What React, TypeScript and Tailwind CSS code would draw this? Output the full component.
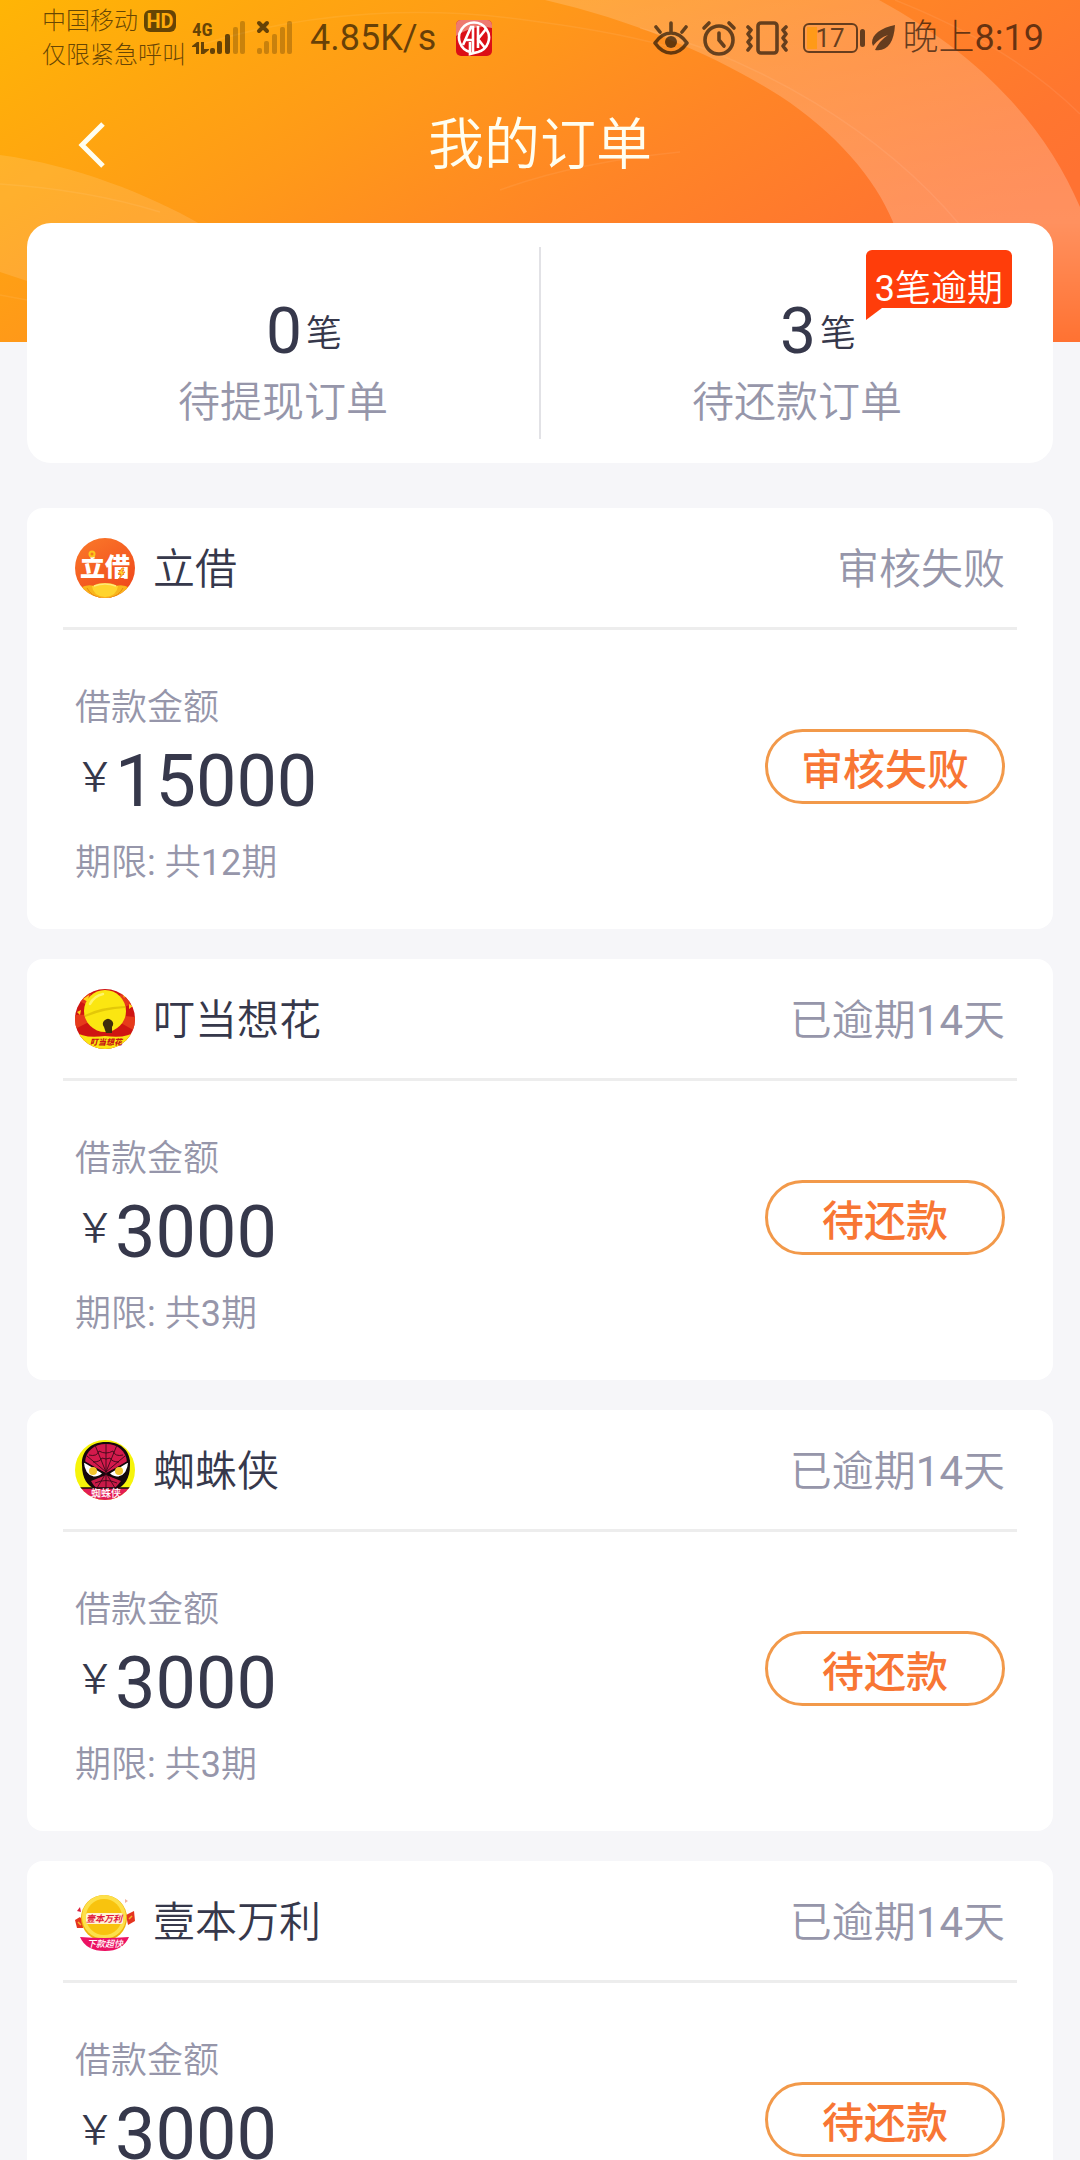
import type { ReactNode } from "react"

interface Order {
  name: string
  status: string
  amount: number
  periods: number
  action: string
  logo: ReactNode
}

// 立借
function LijieLogo() {
  return (
    <svg className="w-15 h-15" viewBox="0 0 60 60" aria-hidden="true">
      <defs>
        <clipPath id="lijie-clip">
          <circle cx="30" cy="30" r="30" />
        </clipPath>
        <linearGradient id="lijie-bg" x1="0" y1="0" x2="0.6" y2="1">
          <stop offset="0" stopColor="#fb7a2a" />
          <stop offset="1" stopColor="#f04a1c" />
        </linearGradient>
      </defs>
      <g clipPath="url(#lijie-clip)">
        <rect width="60" height="60" fill="url(#lijie-bg)" />
        <path d="M5 50Q12 46 19 48Q21 45 30 45Q39 45 41 48Q48 46 55 50L48 62H12Z" fill="#f9b51b" />
        <path d="M17 48Q30 45 43 48Q42 58 30 59Q18 58 17 48Z" fill="#ffd42e" />
        <path d="M12 50Q16 58 26 60M48 50Q44 58 34 60" stroke="#e88a10" strokeWidth="1" fill="none" />
        <path d="M19 48Q30 44 41 48" stroke="#ffe97a" strokeWidth="1.5" fill="none" />
      </g>
      <text x="30" y="38" textAnchor="middle" fontSize="25" className="font-['Noto_Sans_CJK_SC',sans-serif] font-black" fill="#fff">
        立借
      </text>
      <circle cx="17" cy="16" r="2.5" fill="#f47c1f" stroke="#fcc61c" strokeWidth="2" />
      <path d="M47 30L43 36H46L44 41L50 34H47L49 30Z" fill="#ffd42e" stroke="#f07a1c" strokeWidth="0.8" />
    </svg>
  )
}

// 叮当想花
function DingdangLogo() {
  return (
    <svg className="w-15 h-15" viewBox="0 0 60 60" aria-hidden="true">
      <defs>
        <clipPath id="dingdang-clip">
          <circle cx="30" cy="30" r="30" />
        </clipPath>
      </defs>
      <g clipPath="url(#dingdang-clip)">
        <rect width="60" height="60" fill="#cf1512" />
        <path d="M0 10L30 25L12 0ZM60 14L30 25L50 0ZM0 40L30 25L0 26ZM60 42L30 25L60 28Z" fill="#e63a1b" />
        <path d="M8 10L14 6L13 13ZM47 3L52 5L49 9ZM2 23L6 21L5 26ZM54 15L58 17L54 20Z" fill="#ffd51a" />
        <circle cx="30" cy="22" r="21" fill="#fbe611" />
        <path d="M10 26Q24 18 50 17L50 19Q30 20 10 28Z" fill="#e3c808" />
        <path d="M15 15Q19 7 28 5" stroke="#fff46a" strokeWidth="2.5" strokeLinecap="round" fill="none" />
        <path d="M29 38A5 5 0 1 1 37 38L37 44H31Z" fill="#3f2c0c" />
        <path d="M0 42Q8 50 30 47Q52 50 60 42V60H0Z" fill="#fbe611" />
      </g>
      <text x="31" y="56" textAnchor="middle" fontSize="8" fontStyle="italic" className="font-['Noto_Sans_CJK_SC',sans-serif] font-black" fill="#c81414">
        叮当想花
      </text>
    </svg>
  )
}

// 蜘蛛侠
function SpiderLogo() {
  return (
    <svg className="w-15 h-15" viewBox="0 0 60 60" aria-hidden="true">
      <defs>
        <clipPath id="spider-clip">
          <circle cx="30" cy="30" r="30" />
        </clipPath>
      </defs>
      <g clipPath="url(#spider-clip)">
        <rect width="60" height="60" fill="#f6f40a" />
        <path d="M31 2C47 2 56 12 55 25C55 39 49 46 42 49H20C13 46 7 39 7 25C6 12 15 2 31 2Z" fill="#14080c" />
        <path d="M31 4C43 4 51 11 52 22L31 33L10 22C11 11 19 4 31 4Z" fill="#d31a4c" />
        <path d="M31 35L46 41C43 45 40 48 38 49H24C21 48 18 45 16 41Z" fill="#c91a48" />
        <path
          d="M31 4V48M31 32L20 5M31 32L42 5M31 32L12 16M31 32L50 16M14 15Q22 17 24 11Q31 15 38 11Q40 17 48 15M18 22Q25 22 27 18Q31 20 35 18Q37 22 44 22M31 33L22 48M31 33L40 48M20 43Q31 38 42 43"
          stroke="#3a0a18"
          strokeWidth="0.9"
          fill="none"
        />
        <path d="M8 21L28 33Q25 38 18 37Q9 35 8 21ZM54 21L34 33Q37 38 44 37Q53 35 54 21Z" fill="#fff" stroke="#14080c" strokeWidth="1.5" />
        <circle cx="18" cy="31" r="4" fill="#f2c52c" />
        <circle cx="44" cy="31" r="4" fill="#f2c52c" />
        <path d="M0 48H60V60H0Z" fill="#e21d55" />
        <path d="M3 48H57" stroke="#14080c" strokeWidth="1.5" />
      </g>
      <text x="31" y="57" textAnchor="middle" fontSize="10" className="font-['Noto_Sans_CJK_SC',sans-serif] font-medium" fill="#fff">
        蜘蛛侠
      </text>
    </svg>
  )
}

// 壹本万利
function YibenLogo() {
  return (
    <svg className="w-15 h-15" viewBox="0 0 60 60" aria-hidden="true">
      <path d="M0 29L5 26L9 31L8 37L2 37Z" fill="#e5341f" />
      <path d="M51 24L59 20L60 30L53 34Z" fill="#e5341f" />
      <path d="M54 28L57 25" stroke="#f7b52c" strokeWidth="1.5" />
      <path d="M3 31L6 34" stroke="#f7b52c" strokeWidth="1.5" />
      <path d="M2 20L5 16L6 21Z" fill="#d9203f" />
      <path d="M50 8L53 10L50 12Z" fill="#f4b4a0" />
      <circle cx="29" cy="27" r="23" fill="#efb30b" />
      <circle cx="29" cy="26" r="22" fill="#fde04a" />
      <circle cx="29" cy="26" r="18" fill="#f8c30e" />
      <rect x="11" y="22" width="37" height="11" rx="2" fill="#fff3d6" />
      <text x="29" y="31" textAnchor="middle" fontSize="9" fontStyle="italic" className="font-['Noto_Sans_CJK_SC',sans-serif] font-bold" fill="#e0183e">
        壹本万利
      </text>
      <path d="M5 46Q29 48 54 46Q48 60 30 60Q11 60 5 46Z" fill="#ec1263" />
      <text x="30" y="56" textAnchor="middle" fontSize="9" fontStyle="italic" className="font-['Noto_Sans_CJK_SC',sans-serif] font-medium" fill="#fff">
        下款超快
      </text>
    </svg>
  )
}

const orders: Order[] = [
  { name: "立借", status: "审核失败", amount: 15000, periods: 12, action: "审核失败", logo: <LijieLogo /> },
  { name: "叮当想花", status: "已逾期14天", amount: 3000, periods: 3, action: "待还款", logo: <DingdangLogo /> },
  { name: "蜘蛛侠", status: "已逾期14天", amount: 3000, periods: 3, action: "待还款", logo: <SpiderLogo /> },
  { name: "壹本万利", status: "已逾期14天", amount: 3000, periods: 3, action: "待还款", logo: <YibenLogo /> },
]

function HeaderBackground() {
  return (
    <svg
      className="absolute inset-x-0 top-0 -z-10 w-full h-[342px]"
      viewBox="0 0 1080 342"
      preserveAspectRatio="none"
      aria-hidden="true"
    >
      <defs>
        <linearGradient id="header-bg" gradientUnits="userSpaceOnUse" x1="0" y1="0" x2="383" y2="609">
          <stop offset="0" stopColor="#ffb505" />
          <stop offset="0.4" stopColor="#ff9a18" />
          <stop offset="0.66" stopColor="#ff8526" />
          <stop offset="0.9" stopColor="#ff762f" />
          <stop offset="1" stopColor="#ff7232" />
        </linearGradient>
        <linearGradient id="band" x1="0" y1="0" x2="0" y2="1">
          <stop offset="0" stopColor="#fff" stopOpacity="0.16" />
          <stop offset="0.65" stopColor="#fff" stopOpacity="0.22" />
          <stop offset="1" stopColor="#fff" stopOpacity="0" />
        </linearGradient>
      </defs>
      <rect width="1080" height="342" fill="url(#header-bg)" />
      <path d="M545 0C640 22 720 58 780 96C835 132 875 178 893 222L920 342H1080V207C1045 125 980 55 879 0Z" fill="url(#band)" />
      <path d="M0 155C75 165 150 195 200 224V342H60L27 281L0 272Z" fill="#fff" fillOpacity="0.12" />
      <path
        d="M0 184C60 188 115 198 160 212M0 295L27 300M640 28C760 60 880 130 960 225M895 0C970 30 1030 65 1080 114M200 45C310 10 430 5 540 22C600 30 640 38 680 50M500 190C560 168 620 158 680 152"
        stroke="#fff"
        strokeOpacity="0.07"
        strokeWidth="1.5"
        fill="none"
      />
    </svg>
  )
}

function SignalIcons() {
  return (
    <svg className="w-[102px] h-9 ml-1.5" viewBox="0 0 102 36" fill="currentColor" aria-hidden="true">
      <text x="0" y="16" fontSize="19" className="font-['Roboto_Condensed','Liberation_Sans_Narrow',Roboto,sans-serif] font-bold">
        4G
      </text>
      <path d="M4 34V27H0V26L5 22H7V34ZM9 22H12V29H17V30L12 34H9Z" />
      <rect x="18" y="28" width="5" height="6" rx="2" />
      <rect x="25" y="21" width="5" height="13" rx="2" />
      <rect x="33" y="14" width="5" height="20" rx="2" />
      <g opacity="0.35">
        <rect x="41" y="7" width="5" height="27" rx="2" />
        <rect x="48" y="1" width="5" height="33" rx="2" />
        <rect x="65" y="28" width="5" height="6" rx="2" />
        <rect x="72" y="21" width="5" height="13" rx="2" />
        <rect x="80" y="14" width="5" height="20" rx="2" />
        <rect x="88" y="7" width="5" height="27" rx="2" />
        <rect x="95" y="1" width="5" height="33" rx="2" />
      </g>
      <path d="M67 3L75 11M75 3L67 11" stroke="currentColor" strokeWidth="4" strokeLinecap="round" />
    </svg>
  )
}

function StatusBar() {
  return (
    <div className="flex items-center justify-between h-18 pt-1 pl-[42px] pr-9 text-black/60 font-['Roboto','Noto_Sans_CJK_SC',sans-serif]">
      <div className="flex items-center">
        <div className="text-2xl leading-[34px] font-light">
          <div className="flex items-center gap-1.5">
            中国移动
            <span className="flex items-center justify-center w-8 h-[22px] rounded-md bg-black/60 text-[#ffab0a] text-xl leading-[22px] font-bold">
              HD
            </span>
          </div>
          <div>仅限紧急呼叫</div>
        </div>
        <SignalIcons />
        <span className="ml-4 text-4xl">4.85K/s</span>
        <svg className="w-9 h-9 ml-5" viewBox="0 0 36 36" fill="none" stroke="#fff" strokeWidth="2.6" aria-hidden="true">
          <rect width="36" height="36" rx="5" fill="#db0f16" stroke="none" />
          <path d="M0 10V5A5 5 0 0 1 5 0H31A5 5 0 0 1 36 5V8Q18 4 0 16Z" fill="#ee7a70" stroke="none" />
          <path d="M14 32A15 15 0 1 1 22 32L14 34V22" />
          <path d="M7 25L15 7H17V32M10 20H17M22 6V28M30 9L22 19L29 28" />
        </svg>
      </div>
      <div className="flex items-center">
        <svg className="w-9 h-9" viewBox="0 0 36 36" fill="none" stroke="currentColor" strokeWidth="3.6" strokeLinecap="round" strokeLinejoin="round" aria-hidden="true">
          <path d="M2 23Q9 13 18 13T34 23Q27 33 18 33T2 23ZM18 12V3M7 12L3 7M29 12L33 7" />
          <circle cx="18" cy="22" r="6" fill="currentColor" stroke="none" />
        </svg>
        <svg className="w-9 h-9 ml-3" viewBox="0 0 36 36" fill="none" stroke="currentColor" strokeWidth="3.6" strokeLinecap="round" aria-hidden="true">
          <circle cx="18" cy="20" r="14" />
          <path d="M3 8L8 3M28 3L33 8M18 13V20L23 26" />
        </svg>
        <svg className="w-11 h-9 ml-2" viewBox="0 0 44 36" fill="none" stroke="currentColor" strokeWidth="3.6" strokeLinecap="round" strokeLinejoin="round" aria-hidden="true">
          <rect x="13" y="3" width="19" height="30" rx="3" />
          <path d="M3 7L6 10L3 14L6 18L3 22L6 26L3 30M41 7L38 10L41 14L38 18L41 22L38 26L41 30" />
        </svg>
        <div className="relative flex items-center justify-center w-[55px] h-[30px] ml-3.5 rounded-md border-2 border-current text-[26px] leading-none">
          <span className="absolute inset-y-0.5 left-0.5 w-2.5 bg-[#ff9a18]" />
          <span className="relative">17</span>
        </div>
        <span className="w-[5px] h-[18px] ml-0.5 rounded-sm bg-current" />
        <svg className="w-6 h-[26px] ml-1.5" viewBox="0 0 24 26" fill="currentColor" aria-hidden="true">
          <path d="M24 0C10 3 1 9 1 18L2 21Q8 13 17 10Q8 16 4 25C16 27 23 18 24 0Z" />
        </svg>
        <span className="ml-2 text-4xl font-light">
          晚上<span className="font-normal">8:19</span>
        </span>
      </div>
    </div>
  )
}

function Summary() {
  return (
    <section className="relative flex mx-[27px] h-60 py-6 rounded-3xl bg-white">
      <SummaryItem count={0} label="待提现订单" />
      <div className="w-0.5 bg-[#e2e2e6]" />
      <SummaryItem count={3} label="待还款订单" />
      <div className="absolute top-[27px] right-[41px] flex items-end h-[58px] px-[9px] rounded-md rounded-bl-none bg-[#ff3d0a] text-white text-4xl leading-[38px]">
        3笔逾期
        <svg className="absolute left-0 top-full w-4 h-3" viewBox="0 0 16 12" aria-hidden="true">
          <path d="M0 0H16L0 12Z" fill="#ff3d0a" />
        </svg>
      </div>
    </section>
  )
}

function SummaryItem({ count, label }: { count: number; label: string }) {
  return (
    <div className="flex-1 flex flex-col items-center pt-11">
      <div className="flex items-center gap-1 h-[82px] pl-[42px] text-[#36384b]">
        <span className="text-[64px]">{count}</span>
        <span className="pt-1 text-4xl">笔</span>
      </div>
      <div className="text-[42px] leading-[60px] text-[#9696aa]">{label}</div>
    </div>
  )
}

function OrderCard({ order }: { order: Order }) {
  return (
    <article className="px-9 rounded-2xl bg-white">
      <div className="flex items-center justify-between h-[122px] px-3 border-b-3 border-[#ededed] text-[42px]">
        <div className="flex items-center gap-[18px]">
          {order.logo}
          <h2 className="pt-1 text-[#36384b]">{order.name}</h2>
        </div>
        <span className="pt-1 text-[#9696aa]">{order.status}</span>
      </div>
      <div className="flex items-start justify-between h-[299px] px-3 pt-[52px]">
        <div>
          <p className="text-4xl leading-[52px] text-[#9696aa]">借款金额</p>
          <p className="flex items-center h-[103px] pb-2 text-[#36384b]">
            <span className="pb-2 text-[40px]">￥</span>
            <span className="text-[72px]">{order.amount}</span>
          </p>
          <p className="text-4xl leading-[52px] text-[#9696aa]">期限: 共{order.periods}期</p>
        </div>
        <button className="w-60 h-[75px] mt-[47px] rounded-full border-3 border-[#f2994a] text-[42px] leading-none font-['Noto_Sans_CJK_SC',sans-serif] font-medium text-[#f87634]">
          {order.action}
        </button>
      </div>
    </article>
  )
}

export default function App() {
  return (
    <div className="relative isolate min-h-screen bg-[#f6f6f9] font-['Roboto','Noto_Sans_CJK_SC_DemiLight','Noto_Sans_CJK_SC',sans-serif]">
      <HeaderBackground />
      <StatusBar />
      <header className="relative flex items-center justify-center h-[142px] mb-[9px] pt-1 text-[#fffef0]">
        <button className="absolute left-[70px] flex items-center justify-center w-10 h-15" aria-label="返回">
          <svg className="w-8 h-12" viewBox="0 0 32 48" fill="none" stroke="currentColor" strokeWidth="5" aria-hidden="true">
            <path d="M29 3L8 24L29 45" />
          </svg>
        </button>
        <h1 className="text-[56px]">我的订单</h1>
      </header>
      <main>
        <Summary />
        <div className="flex flex-col gap-[30px] mx-[27px] mt-[45px]">
          {orders.map((order) => (
            <OrderCard key={order.name} order={order} />
          ))}
        </div>
      </main>
    </div>
  )
}
